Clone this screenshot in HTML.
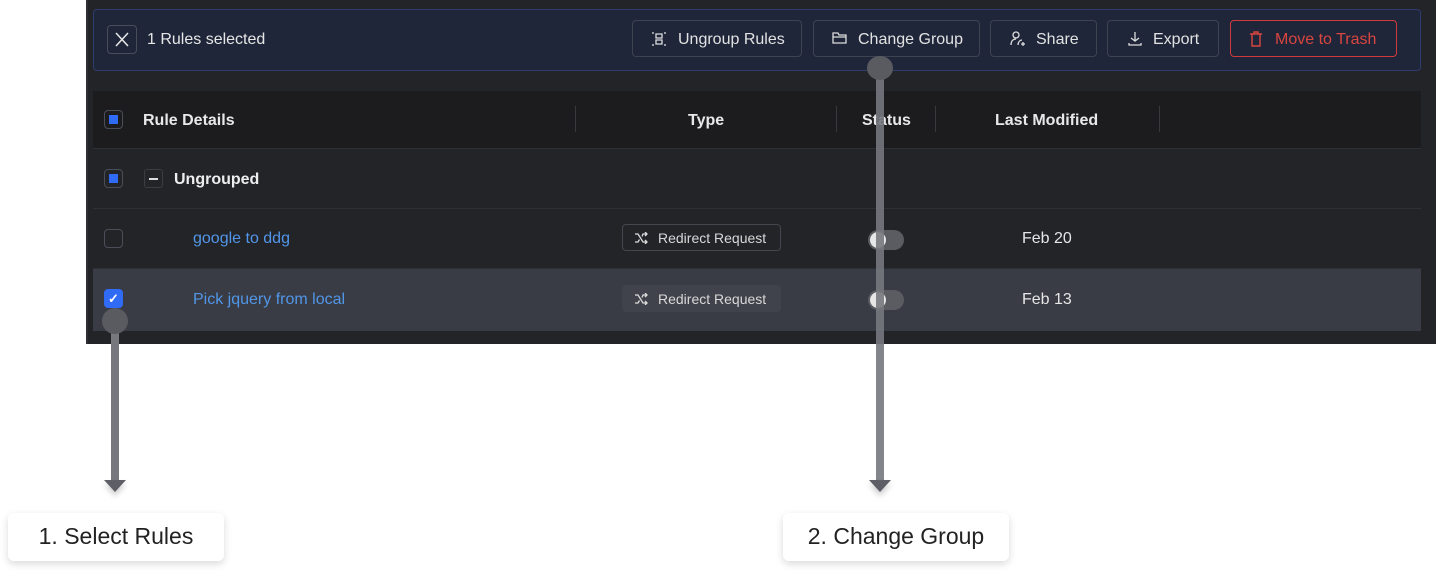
<!DOCTYPE html>
<html><head><style>
*{box-sizing:border-box;margin:0;padding:0}
body{width:1436px;height:579px;background:#fff;position:relative;overflow:hidden;font-family:"Liberation Sans",sans-serif}
.panel{position:absolute;left:86px;top:0;width:1350px;height:344px;background:#232428;border-left:2px solid #2e2f33}
.bar{position:absolute;left:93px;top:9px;width:1328px;height:62px;background:#1f263a;border:1px solid #2c3d6e;border-radius:4px}
.x{position:absolute;left:107px;top:25px;width:30px;height:29px;border:1px solid #4a4e58;border-radius:4px}
.sel{position:absolute;left:147px;top:31px;color:#e6e6e6;font-size:16px}
.btn{position:absolute;top:20px;height:37px;border:1px solid #3e4352;border-radius:4px;color:#e2e2e2;font-size:16px;line-height:37px;background:#1f263a}
.btn svg{position:absolute;top:10px}
.btn span{position:absolute;top:0}
.hdr{position:absolute;left:93px;top:91px;width:1328px;height:58px;background:#1c1c1e;border-bottom:1px solid #2e3035}
.row{position:absolute;left:93px;width:1328px;border-bottom:1px solid #2e3035}
.cb{position:absolute;width:19px;height:19px;border:1px solid #4a4e58;border-radius:4px}
.cb.ind::after{content:"";position:absolute;left:4px;top:4px;width:9px;height:9px;background:#2f6bf5}
.th{position:absolute;top:112px;color:#e8e8e8;font-size:16px;font-weight:bold}
.sep{position:absolute;top:106px;width:1px;height:26px;background:#38393d}
.link{position:absolute;color:#5196e8;font-size:16px}
.tag{position:absolute;left:622px;width:159px;height:27px;border:1px solid #44474f;border-radius:4px;color:#d8d8d8;font-size:14px;line-height:26px;padding-left:35px}
.tag svg{position:absolute;left:11px;top:7px}
.tog{position:absolute;left:868px;width:36px;height:20px;border-radius:10px;background:#5a5c62}
.tog::after{content:"";position:absolute;left:2px;top:2px;width:16px;height:16px;border-radius:50%;background:#e6e6e6}
.date{position:absolute;left:1022px;color:#e6e6e6;font-size:16px}
.line{position:absolute;width:8px;background:#77787e}
.dot{position:absolute;width:26px;height:26px;border-radius:50%;background:#5a5b61}
.tri{position:absolute;width:0;height:0;border-left:11px solid transparent;border-right:11px solid transparent;border-top:12px solid #5e5f66;filter:drop-shadow(0 4px 3px rgba(0,0,0,.2))}
.lbl{position:absolute;top:513px;height:48px;background:#fff;border-radius:6px;box-shadow:0 3px 8px rgba(0,0,0,.15);color:#222;font-size:23px;line-height:46px;text-align:center}
</style></head><body>
<div class="panel"></div>
<div class="bar"></div>
<div class="x"><svg width="28" height="27" viewBox="0 0 28 27" stroke="#e8e8e8" stroke-width="1.5"><path d="M8 7l12 13M20 7L8 20"/></svg></div>
<div class="sel">1 Rules selected</div>

<div class="btn" style="left:632px;width:170px"><svg style="left:18px" width="16" height="16" viewBox="0 0 16 16" fill="none" stroke="#ddd" stroke-width="1.3"><path d="M2 1v2M14 1v2M2 13v2M14 13v2M5 3h6v4H5zM5 9h6v4H5z"/></svg><span style="left:45px">Ungroup Rules</span></div>
<div class="btn" style="left:813px;width:167px"><svg style="left:18px" width="16" height="14" viewBox="0 0 16 14" fill="none" stroke="#ddd" stroke-width="1.3"><path d="M1 2h5l1 2h7v8H1zM1 6h13"/></svg><span style="left:44px">Change Group</span></div>
<div class="btn" style="left:990px;width:107px"><svg style="left:19px" width="16" height="16" viewBox="0 0 16 16" fill="none" stroke="#ddd" stroke-width="1.3"><circle cx="6" cy="4" r="3"/><path d="M1 14c0-4 2-6 5-6M8 14c0-3 2-5 4-5M13 11v4M11 13h4"/></svg><span style="left:45px">Share</span></div>
<div class="btn" style="left:1107px;width:112px"><svg style="left:19px" width="16" height="16" viewBox="0 0 16 16" fill="none" stroke="#ddd" stroke-width="1.3"><path d="M8 1v9M4 7l4 3 4-3M2 12v2h12v-2"/></svg><span style="left:45px">Export</span></div>
<div class="btn" style="left:1230px;width:167px;border-color:#d13a3a;color:#d9453f"><svg style="left:18px" width="14" height="16" viewBox="0 0 14 16" fill="none" stroke="#d9453f" stroke-width="1.4"><path d="M1 3h12M5 3V1h4v2M3 3v12h8V3"/></svg><span style="left:44px">Move to Trash</span></div>

<div class="hdr"></div>
<div class="cb ind" style="left:104px;top:110px"></div>
<div class="th" style="left:143px">Rule Details</div>
<div class="sep" style="left:575px"></div>
<div class="th" style="left:688px">Type</div>
<div class="sep" style="left:836px"></div>
<div class="th" style="left:862px">Status</div>
<div class="sep" style="left:935px"></div>
<div class="th" style="left:995px">Last Modified</div>
<div class="sep" style="left:1159px"></div>

<div class="row" style="top:149px;height:60px"></div>
<div class="cb ind" style="left:104px;top:169px"></div>
<div style="position:absolute;left:144px;top:169px;width:19px;height:19px;border:1px solid #3a3d44;border-radius:3px"><div style="position:absolute;left:4px;top:8px;width:9px;height:1.5px;background:#ddd"></div></div>
<div style="position:absolute;left:174px;top:171px;color:#eee;font-size:16px;font-weight:bold">Ungrouped</div>

<div class="row" style="top:209px;height:60px"></div>
<div class="cb" style="left:104px;top:229px"></div>
<div class="link" style="left:193px;top:230px">google to ddg</div>
<div class="tag" style="top:224px"><svg width="14" height="12" viewBox="0 0 14 12" fill="none" stroke="#ddd" stroke-width="1.3"><path d="M1 2h3l5 8h4M1 10h3l1.5-2.5M8 4.5 9 2h4M11 0l2 2-2 2M11 8l2 2-2 2"/></svg>Redirect Request</div>
<div class="tog" style="top:230px"></div>
<div class="date" style="top:230px">Feb 20</div>

<div class="row" style="top:269px;height:62px;background:#393c45;border:none"></div>
<div class="cb" style="left:104px;top:289px;background:#2f6bf5;border-color:#2f6bf5;color:#fff;font-size:13px;text-align:center;line-height:17px;font-weight:bold">✓</div>
<div class="link" style="left:193px;top:291px">Pick jquery from local</div>
<div class="tag" style="top:285px;background:#40434b;border-color:#40434b"><svg width="14" height="12" viewBox="0 0 14 12" fill="none" stroke="#ddd" stroke-width="1.3"><path d="M1 2h3l5 8h4M1 10h3l1.5-2.5M8 4.5 9 2h4M11 0l2 2-2 2M11 8l2 2-2 2"/></svg>Redirect Request</div>
<div class="tog" style="top:290px"></div>
<div class="date" style="top:291px">Feb 13</div>

<div class="line" style="left:111px;top:320px;height:162px"></div>
<div class="dot" style="left:102px;top:308px"></div>
<div class="tri" style="left:104px;top:480px"></div>
<div class="lbl" style="left:8px;width:216px">1. Select Rules</div>

<div class="line" style="left:876px;top:67px;height:415px;opacity:.9"></div>
<div class="dot" style="left:867px;top:56px;height:24px;width:26px"></div>
<div class="tri" style="left:869px;top:480px"></div>
<div class="lbl" style="left:783px;width:226px">2. Change Group</div>
</body></html>
